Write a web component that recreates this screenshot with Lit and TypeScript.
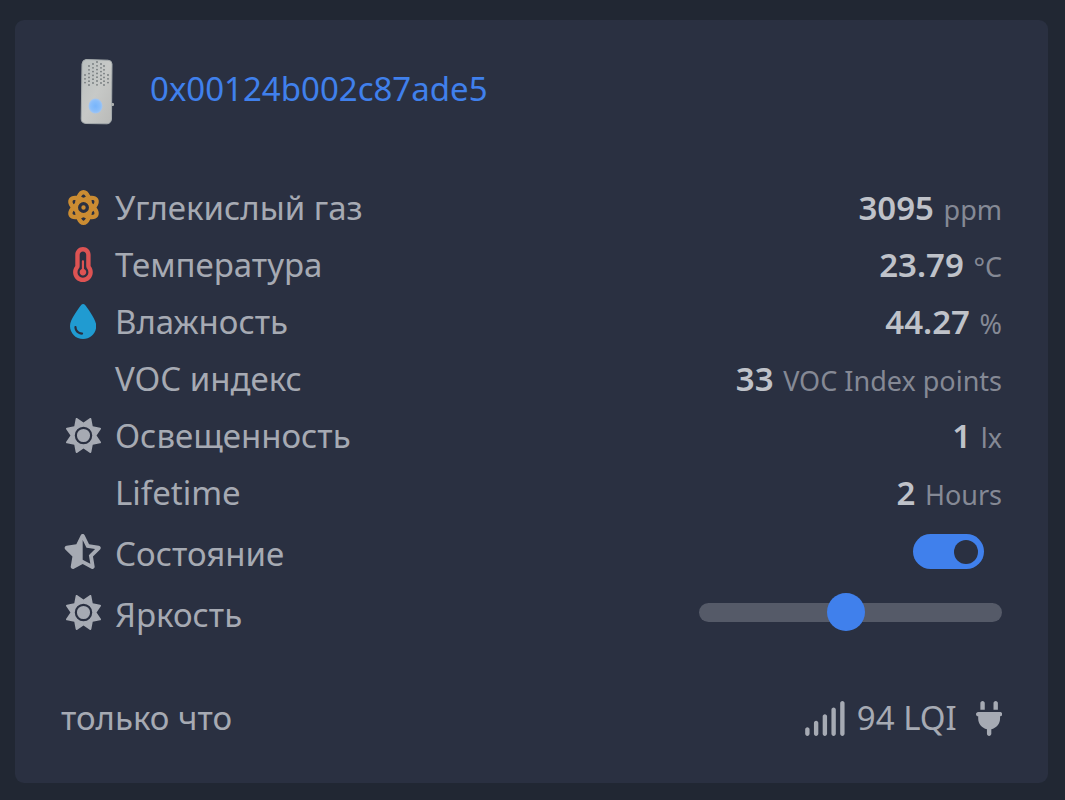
import { LitElement, html, svg, css, nothing } from "lit";
import { customElement, property, state } from "lit/decorators.js";

interface Glyph {
  box: string;
  path: string;
}

const glyphs: Record<string, Glyph> = {
  atom: {
    box: "0 0 512 512",
    path: "M256 398.8c-11.8 5.1-23.4 9.7-34.9 13.5c16.7 33.8 31 35.7 34.9 35.7s18.1-1.9 34.9-35.7c-11.4-3.9-23.1-8.4-34.9-13.5zM446 256c33 45.2 44.3 90.9 23.6 128c-20.2 36.3-62.5 49.3-115.2 43.2c-22 52.1-55.6 84.8-98.4 84.8s-76.4-32.7-98.4-84.8c-52.7 6.1-95-6.8-115.2-43.2C21.7 346.9 33 301.2 66 256C33 210.8 21.7 165.1 42.4 128c20.2-36.3 62.5-49.3 115.2-43.2C179.6 32.7 213.2 0 256 0s76.4 32.7 98.4 84.8c52.7-6.1 95 6.8 115.2 43.2c20.7 37.1 9.4 82.8-23.6 128zm-65.8 67.4c-1.7 14.2-3.9 28-6.7 41.2c31.8 1.4 38.6-8.7 40.2-11.7c2.3-4.2 7-17.9-11.9-48.1c-6.8 6.3-14 12.5-21.6 18.6zm-6.7-175.9c2.8 13.1 5 26.9 6.7 41.2c7.6 6.1 14.8 12.3 21.6 18.6c18.9-30.2 14.2-44 11.9-48.1c-1.6-2.9-8.4-13-40.2-11.7zM290.9 99.7C274.1 65.9 259.9 64 256 64s-18.1 1.9-34.9 35.7c11.4 3.9 23.1 8.4 34.9 13.5c11.8-5.1 23.4-9.7 34.9-13.5zm-159 88.9c1.7-14.3 3.9-28 6.7-41.2c-31.8-1.4-38.6 8.7-40.2 11.7c-2.3 4.2-7 17.9 11.9 48.1c6.8-6.3 14-12.5 21.6-18.6zM110.2 304.8C91.4 335 96 348.7 98.3 352.9c1.6 2.9 8.4 13 40.2 11.7c-2.8-13.1-5-26.9-6.7-41.2c-7.6-6.1-14.8-12.3-21.6-18.6zM336 256a80 80 0 1 0 -160 0 80 80 0 1 0 160 0zm-80-32a32 32 0 1 1 0 64 32 32 0 1 1 0-64z",
  },
  thermometer: {
    box: "0 0 320 512",
    path: "M160 64c-26.5 0-48 21.5-48 48V276.5c0 17.3-7.1 31.9-15.3 42.5C86.2 332.6 80 349.5 80 368c0 44.2 35.8 80 80 80s80-35.8 80-80c0-18.5-6.2-35.4-16.7-48.9c-8.2-10.6-15.3-25.2-15.3-42.5V112c0-26.5-21.5-48-48-48zM48 112C48 50.2 98.1 0 160 0s112 50.1 112 112V276.5c0 .1 .1 .3 .2 .6c.2 .6 .8 1.6 1.7 2.8c18.9 24.4 30.1 55 30.1 88.1c0 79.5-64.5 144-144 144S16 447.5 16 368c0-33.2 11.2-63.8 30.1-88.1c.9-1.2 1.5-2.2 1.7-2.8c.1-.3 .2-.5 .2-.6V112zM208 368c0 26.5-21.5 48-48 48s-48-21.5-48-48c0-20.9 13.4-38.7 32-45.3V208c0-8.8 7.2-16 16-16s16 7.2 16 16V322.7c18.6 6.6 32 24.4 32 45.3z",
  },
  droplet: {
    box: "0 0 384 512",
    path: "M192 512C86 512 0 426 0 320C0 228.8 130.2 57.7 166.6 11.7C172.6 4.2 181.5 0 191.1 0h1.8c9.6 0 18.5 4.2 24.5 11.7C253.8 57.7 384 228.8 384 320c0 106-86 192-192 192zM96 336c0-8.8-7.2-16-16-16s-16 7.2-16 16c0 61.9 50.1 112 112 112c8.8 0 16-7.2 16-16s-7.2-16-16-16c-44.2 0-80-35.8-80-80z",
  },
  sun: {
    box: "0 0 512 512",
    path: "M361.5 1.2c5 2.1 8.6 6.6 9.6 11.9L391 121l107.9 19.8c5.3 1 9.8 4.6 11.9 9.6s1.5 10.7-1.6 15.2L446.9 256l62.3 90.3c3.1 4.5 3.7 10.2 1.6 15.2s-6.6 8.6-11.9 9.6L391 391 371.1 498.9c-1 5.3-4.6 9.8-9.6 11.9s-10.7 1.5-15.2-1.6L256 446.9l-90.3 62.3c-4.5 3.1-10.2 3.7-15.2 1.6s-8.6-6.6-9.6-11.9L121 391 13.1 371.1c-5.3-1-9.8-4.6-11.9-9.6s-1.5-10.7 1.6-15.2L65.1 256 2.8 165.7c-3.1-4.5-3.7-10.2-1.6-15.2s6.6-8.6 11.9-9.6L121 121 140.9 13.1c1-5.3 4.6-9.8 9.6-11.9s10.7-1.5 15.2 1.6L256 65.1 346.3 2.8c4.5-3.1 10.2-3.7 15.2-1.6zM160 256a96 96 0 1 1 192 0 96 96 0 1 1 -192 0zm224 0a128 128 0 1 0 -256 0 128 128 0 1 0 256 0z",
  },
  star: {
    box: "0 0 576 512",
    path: "M288 376.4l.1-.1 26.4 14.1 85.2 45.5-16.5-97.6-4.8-28.7 20.7-20.5 70.1-69.3-96.1-14.2-29.3-4.3-12.9-26.6L288.1 86.9l-.1 .3V376.4zm175.1 98.3c2 12-3 24.2-12.9 31.3s-23 8-33.8 2.3L288.1 439.8 159.8 508.3C149 514 135.9 513.1 126 506s-14.9-19.3-12.9-31.3L137.8 329 33.6 225.9c-8.6-8.5-11.7-21.2-7.9-32.7s13.7-19.9 25.7-21.7L195 150.3 259.4 18c5.4-11 16.5-18 28.8-18s23.4 7 28.8 18l64.3 132.3 143.6 21.2c12 1.8 22 10.2 25.7 21.7s.7 24.2-7.9 32.7L438.5 329l24.6 145.7z",
  },
  signal: {
    box: "0 0 640 512",
    path: "M576 0c17.7 0 32 14.3 32 32V480c0 17.7-14.3 32-32 32s-32-14.3-32-32V32c0-17.7 14.3-32 32-32zM448 96c17.7 0 32 14.3 32 32V480c0 17.7-14.3 32-32 32s-32-14.3-32-32V128c0-17.7 14.3-32 32-32zM352 224V480c0 17.7-14.3 32-32 32s-32-14.3-32-32V224c0-17.7 14.3-32 32-32s32 14.3 32 32zM192 288c17.7 0 32 14.3 32 32V480c0 17.7-14.3 32-32 32s-32-14.3-32-32V320c0-17.7 14.3-32 32-32zM96 416v64c0 17.7-14.3 32-32 32s-32-14.3-32-32V416c0-17.7 14.3-32 32-32s32 14.3 32 32z",
  },
  plug: {
    box: "0 0 384 512",
    path: "M96 0C78.3 0 64 14.3 64 32v96h64V32c0-17.7-14.3-32-32-32zM288 0c-17.7 0-32 14.3-32 32v96h64V32c0-17.7-14.3-32-32-32zM32 160c-17.7 0-32 14.3-32 32s14.3 32 32 32v32c0 77.4 55 142 128 156.8V480c0 17.7 14.3 32 32 32s32-14.3 32-32V412.8C297 398 352 333.4 352 256V224c17.7 0 32-14.3 32-32s-14.3-32-32-32H32z",
  },
};

function icon(name?: string) {
  if (!name) return nothing;
  const g = glyphs[name];
  return html`<svg class="glyph" viewBox=${g.box} aria-hidden="true"><path d=${g.path}></path></svg>`;
}

// Speaker grille of the sensor: [x, first y, number of holes] for each column.
const grille: [number, number, number][] = [
  [5, 17, 3],
  [9, 8, 6],
  [13, 6, 6],
  [17, 4, 7],
  [21, 6, 6],
  [24, 8, 6],
  [28, 17, 3],
];

interface Reading {
  label: string;
  value: string;
  unit: string;
  icon?: string;
  tone?: string;
}

const readings: Reading[] = [
  { label: "Углекислый газ", value: "3095", unit: "ppm", icon: "atom", tone: "amber" },
  { label: "Температура", value: "23.79", unit: "°C", icon: "thermometer", tone: "red" },
  { label: "Влажность", value: "44.27", unit: "%", icon: "droplet", tone: "blue" },
  { label: "VOC индекс", value: "33", unit: "VOC Index points" },
  { label: "Освещенность", value: "1", unit: "lx", icon: "sun" },
  { label: "Lifetime", value: "2", unit: "Hours" },
];

@customElement("device-picture")
export class DevicePicture extends LitElement {
  static styles = css`
    :host {
      display: flex;
      justify-content: center;
      width: 73px;
    }
    .picture {
      width: 36px;
      height: 68px;
    }
  `;

  render() {
    return html`<svg class="picture" viewBox="0 0 36 68" role="img" aria-label="Датчик">
      <defs>
        <linearGradient id="shell" x1="0" y1="0" x2="1" y2="1">
          <stop offset="0" stop-color="#b9bfbf"></stop>
          <stop offset="0.5" stop-color="#c7c9c7"></stop>
          <stop offset="1" stop-color="#b9bab8"></stop>
        </linearGradient>
        <radialGradient id="glow">
          <stop offset="0" stop-color="#78b5fb"></stop>
          <stop offset="0.7" stop-color="#8abefa"></stop>
          <stop offset="1" stop-color="#a4c6f0"></stop>
        </radialGradient>
      </defs>
      <rect x="31" y="45" width="3" height="3" rx="1" fill="#aeb0b0"></rect>
      <path
        d="M6 1.500L28 2.200Q32 2.500 32 6L31.500 61Q31 65.500 27 65.800L6 65.500Q1.200 65 1.200 61L2 6Q2.500 1.800 6 1.500Z"
        fill="url(#shell)"
        stroke="#a5abad"
      ></path>
      ${grille.map(([x, y, n]) =>
        Array.from(
          { length: n },
          (_, i) => svg`<circle cx=${x} cy=${y + i * 3.8} r="0.9" fill="#747a7c"></circle>`
        )
      )}
      <ellipse cx="15.500" cy="48" rx="7" ry="7.500" fill="url(#glow)"></ellipse>
    </svg>`;
  }
}

@customElement("feature-row")
export class FeatureRow extends LitElement {
  @property() label = "";
  @property() icon?: string;
  @property() tone = "";
  @property() kind = "value";
  @property() value = "";
  @property() unit = "";
  @state() private on = true;
  @state() private level = 123;

  static styles = css`
    :host {
      display: flex;
      align-items: center;
      gap: 10px;
      height: 57px;
    }
    :host([kind="switch"]),
    :host([kind="range"]) {
      height: 61px;
    }
    .icon {
      display: flex;
      justify-content: center;
      flex: none;
      width: 44px;
    }
    .glyph {
      display: block;
      height: 35px;
      fill: currentColor;
    }
    .amber {
      color: #cb8c32;
    }
    .red {
      color: #dd5353;
    }
    .blue {
      color: #209bd1;
    }
    .label {
      flex: 1;
    }
    label.label {
      padding-top: 4px;
    }
    .reading {
      padding-top: 2px;
      white-space: nowrap;
    }
    .value {
      font-weight: 600;
      color: #bfc2c9;
    }
    .unit {
      margin-left: 1px;
      font-size: 27px;
      color: #858995;
    }
    .switch {
      appearance: none;
      box-sizing: border-box;
      display: flex;
      align-items: center;
      width: 71px;
      height: 35px;
      margin: 0 18px 0 0;
      padding: 0 6px;
      border-radius: 18px;
      background: #555a68;
    }
    .switch::before {
      content: "";
      width: 24px;
      height: 24px;
      border-radius: 50%;
      background: #2a3041;
    }
    .switch:checked {
      justify-content: flex-end;
      background: #4080ec;
    }
    .range {
      appearance: none;
      width: 303px;
      height: 38px;
      margin: 0;
      background: transparent;
    }
    .range::-webkit-slider-runnable-track {
      height: 19px;
      border-radius: 10px;
      background: #555a68;
    }
    .range::-webkit-slider-thumb {
      appearance: none;
      width: 38px;
      height: 38px;
      margin-top: -10px;
      border-radius: 50%;
      background: #4080ec;
    }
  `;

  private control() {
    if (this.kind === "switch") {
      return html`<input
        id="control"
        class="switch"
        type="checkbox"
        .checked=${this.on}
        @change=${(e: Event) => (this.on = (e.target as HTMLInputElement).checked)}
      />`;
    }
    if (this.kind === "range") {
      return html`<input
        id="control"
        class="range"
        type="range"
        min="0"
        max="254"
        .value=${String(this.level)}
        @input=${(e: Event) => (this.level = Number((e.target as HTMLInputElement).value))}
      />`;
    }
    return html`<span class="reading"
      ><span class="value">${this.value}</span> <span class="unit">${this.unit}</span></span
    >`;
  }

  render() {
    return html`
      <span class="icon ${this.tone}">${icon(this.icon)}</span>
      ${this.kind === "value"
        ? html`<span class="label">${this.label}</span>`
        : html`<label class="label" for="control">${this.label}</label>`}
      ${this.control()}
    `;
  }
}

@customElement("app-root")
export class AppRoot extends LitElement {
  static styles = css`
    :host {
      display: block;
      box-sizing: border-box;
      min-height: 100vh;
      padding: 20px 17px 17px 15px;
      background: #212733;
      color: #a6aab3;
      font-family: "Noto Sans", "Open Sans", sans-serif;
      font-size: 33px;
      line-height: 48px;
    }
    .card {
      padding: 36px 46px 41px 46px;
      border-radius: 9px;
      background: #2a3041;
    }
    .header {
      display: flex;
      align-items: center;
      gap: 16px;
      height: 72px;
    }
    .title {
      margin: 0;
      padding-bottom: 6px;
      font-size: inherit;
      font-weight: 400;
    }
    .link {
      color: #4080ec;
      text-decoration: none;
    }
    .features {
      padding: 51px 0;
    }
    .footer {
      display: flex;
      align-items: center;
      justify-content: space-between;
    }
    .status {
      display: flex;
      align-items: center;
      gap: 10px;
    }
    .glyph {
      display: block;
      height: 35px;
      fill: currentColor;
    }
    .power {
      display: flex;
      margin-left: 9px;
    }
  `;

  render() {
    return html`
      <main class="card">
        <header class="header">
          <device-picture></device-picture>
          <h1 class="title"><a class="link" href="#device">0x00124b002c87ade5</a></h1>
        </header>
        <section class="features">
          ${readings.map(
            (r) => html`<feature-row
              label=${r.label}
              .icon=${r.icon}
              tone=${r.tone ?? ""}
              value=${r.value}
              unit=${r.unit}
            ></feature-row>`
          )}
          <feature-row kind="switch" label="Состояние" .icon=${"star"}></feature-row>
          <feature-row kind="range" label="Яркость" .icon=${"sun"}></feature-row>
        </section>
        <footer class="footer">
          <span>только что</span>
          <span class="status">
            ${icon("signal")}
            <span>94 LQI</span>
            <span class="power">${icon("plug")}</span>
          </span>
        </footer>
      </main>
    `;
  }
}
